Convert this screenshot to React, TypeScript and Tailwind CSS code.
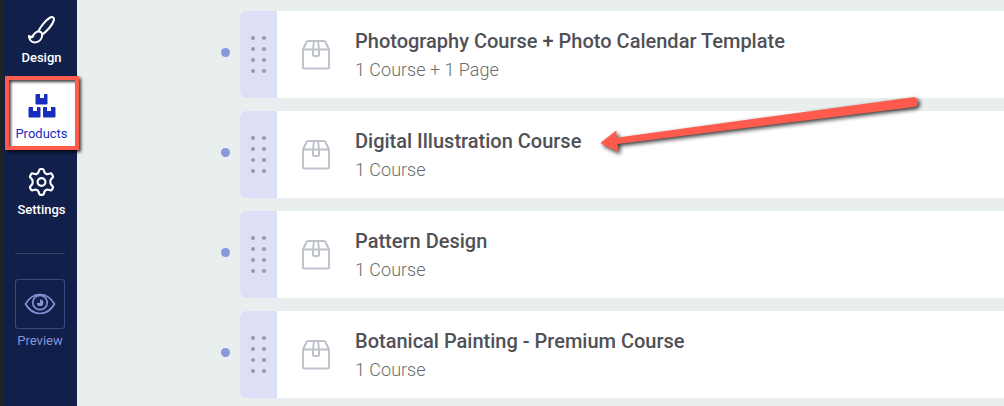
import React from 'react';

type Product = { title: string; detail: string };

const products: Product[] = [
  { title: 'Photography Course + Photo Calendar Template', detail: '1 Course + 1 Page' },
  { title: 'Digital Illustration Course', detail: '1 Course' },
  { title: 'Pattern Design', detail: '1 Course' },
  { title: 'Botanical Painting - Premium Course', detail: '1 Course' },
];

function BrushIcon() {
  return (
    <svg viewBox="0 0 28 28" className="size-7" fill="none" stroke="currentColor" strokeWidth="2" strokeLinejoin="round" strokeLinecap="round" aria-hidden="true">
      <path d="M10.4 15.2C12.8 10.2 18 3.8 22.2 1.5C24.6 .3 26.600 2 25.800 4.400C24.400 9 19 15.300 14 18.600" />
      <path d="M10.2 15.4C12.5 15.2 14.300 16.700 14.200 19C14.100 23.400 10.800 26.500 6.600 26.400C3.500 26.300 1.200 23.800 1 20.200C2.200 21.200 3.700 21.200 4.700 20C5.900 17.900 7.200 15.700 10.200 15.400Z" />
      <path d="M1 20.200C2.200 21.800 4 21.800 5 20" strokeWidth="2.500" />
    </svg>
  );
}

function BoxesIcon() {
  return (
    <svg viewBox="0 0 28 26" className="h-[26px] w-7" fill="currentColor" aria-hidden="true">
      <path d="M8.500 1H12v4h4V1h2.500q1 0 1 1v8.500q0 1-1 1H8.500q-1 0-1-1V2q0-1 1-1Z" />
      <path d="M1.500 14H5v4h4v-4h2.500q1 0 1 1v8.500q0 1-1 1H1.500q-1 0-1-1V15q0-1 1-1Z" />
      <path d="M16 14h3v4h4v-4h3.500q1 0 1 1v8.500q0 1-1 1H16q-1 0-1-1V15q0-1 1-1Z" />
    </svg>
  );
}

function GearIcon() {
  return (
    <svg viewBox="0 0 28 30" className="h-[30px] w-7" fill="none" stroke="currentColor" strokeWidth="2.200" strokeLinejoin="round" aria-hidden="true">
      <path d="M12.600 2H14.400Q15.500 2 15.800 3.100L16.400 5Q16.800 6.200 18 6.700Q19 7.300 20.200 7L22.200 6.500Q23.300 6.200 23.900 7.200L24.800 8.800Q25.400 9.800 24.600 10.600L23.200 12.100Q22.300 13 22.300 14.900Q22.300 16.800 23.200 17.700L24.600 19.200Q25.400 20 24.800 21L23.900 22.600Q23.300 23.600 22.200 23.300L20.200 22.800Q19 22.500 18 23.100Q16.800 23.700 16.400 24.900L15.800 26.800Q15.500 27.900 14.400 27.900H12.600Q11.500 27.900 11.200 26.800L10.600 24.900Q10.200 23.700 9 23.100Q8 22.500 6.800 22.800L4.800 23.300Q3.700 23.600 3.100 22.600L2.200 21Q1.600 20 2.400 19.200L3.800 17.700Q4.700 16.800 4.700 14.900Q4.700 13 3.800 12.100L2.400 10.600Q1.600 9.800 2.200 8.800L3.100 7.200Q3.700 6.200 4.800 6.500L6.800 7Q8 7.300 9 6.700Q10.200 6.200 10.600 5L11.200 3.100Q11.500 2 12.600 2Z" />
      <circle cx="13.500" cy="15" r="3.900" />
    </svg>
  );
}

function EyeIcon() {
  return (
    <svg viewBox="0 0 32 22" className="h-[22px] w-8" fill="none" stroke="currentColor" strokeWidth="1.700" aria-hidden="true">
      <path d="M1.500 11C5 5 10 1.500 16 1.500S27 5 30.500 11C27 17 22 20.500 16 20.500S5 17 1.500 11Z" />
      <circle cx="16" cy="9.500" r="7.200" />
      <path d="M16 6.500a3.300 3.300 0 1 1-3.200 3.500h2.500q.7 0 .7-.7Z" fill="currentColor" stroke="none" />
    </svg>
  );
}

function PackageIcon() {
  return (
    <svg viewBox="0 0 28 30" className="h-[30px] w-7 shrink-0 text-[#bec2cd]" fill="none" stroke="currentColor" strokeWidth="2" strokeLinejoin="round" aria-hidden="true">
      <path d="M1 9.500 4.500 2Q5 1 6 1H22Q23 1 23.500 2L27 9.500V27Q27 28.500 25.500 28.500H2.500Q1 28.500 1 27Z" />
      <path d="M1 9.500H27M12 1 11 9.500V14.500Q11 16 12.500 16H15.500Q17 16 17 14.500V9.500L16 1" />
    </svg>
  );
}

function NavItem({ label, icon, active = false }: { label: string; icon: React.ReactNode; active?: boolean }) {
  return (
    <a
      href={'#' + label.toLowerCase()}
      aria-current={active ? 'page' : undefined}
      className={
        'relative flex h-[76px] flex-col items-center gap-[5px] pt-[15px] pl-[3px] text-[13px] leading-4 ' +
        (active ? 'text-[#172ebd]' : 'font-medium text-white')
      }
    >
      {active && (
        <span className="absolute top-0 -right-[2px] left-[2px] h-[74px] border-4 border-[#ff5b4d] bg-white shadow-[2px_2px_3px_rgba(0,0,0,0.75),inset_2px_2px_3px_rgba(0,0,0,0.75)]" />
      )}
      <span className="relative flex h-[30px] items-center">{icon}</span>
      <span className="relative">{label}</span>
    </a>
  );
}

function Sidebar() {
  return (
    <aside className="relative z-10 flex w-[77px] shrink-0 flex-col border-l-[3px] border-[#222328] bg-[#10204b]">
      <nav>
        <NavItem label="Design" icon={<BrushIcon />} />
        <NavItem label="Products" icon={<BoxesIcon />} active />
        <NavItem label="Settings" icon={<GearIcon />} />
      </nav>
      <hr className="mx-3 mt-[25px] border-[#364164]" />
      <button type="button" className="mt-[25px] flex flex-col items-center gap-1 text-[13px] leading-4 text-[#8793d7]">
        <span className="flex size-[50px] items-center justify-center rounded-[3px] border border-[#3c4a7d]">
          <EyeIcon />
        </span>
        Preview
      </button>
    </aside>
  );
}

function ProductRow({ title, detail }: Product) {
  return (
    <li className="flex items-center gap-[10px]">
      <span className="mb-1 size-[9px] shrink-0 rounded-full bg-[#8998dc]" />
      <article className="flex h-[87px] min-w-0 flex-1 overflow-hidden rounded-l-md bg-white">
        <button type="button" aria-label={'Reorder ' + title} className="flex w-[37px] shrink-0 items-center justify-center bg-[#dddff6]">
          <span className="grid grid-cols-2 gap-[7px]">
            {Array.from({ length: 8 }, (_, i) => (
              <span key={i} className="size-1 rounded-full bg-[#969aae]" />
            ))}
          </span>
        </button>
        <div className="flex min-w-0 items-center gap-[25px] pl-[25px]">
          <PackageIcon />
          <div className="pt-[3px]">
            <h2 className="text-[20px] leading-7 font-medium whitespace-nowrap text-[#505156]">{title}</h2>
            <p className="text-[18px] leading-[30px] font-light text-[#6c6c6c]">{detail}</p>
          </div>
        </div>
      </article>
    </li>
  );
}

function PointerArrow() {
  return (
    <svg viewBox="0 0 330 66" className="pointer-events-none absolute top-[92px] left-[596px] h-[66px] w-[330px] drop-shadow-[2px_2px_2px_rgba(0,0,0,0.8)]" aria-hidden="true">
      <path
        d="M5.500 50 19 39.500Q20.500 38.500 20.500 40L20.500 45.700 317 5.200C323 4.500 324 14 318 15L21.500 52 22.500 58.500Q22.500 60 21 59.500L5.500 52Q4.500 51 5.500 50Z"
        fill="#ff5b4d"
      />
    </svg>
  );
}

export default function App() {
  return (
    <div className="relative flex min-h-screen overflow-hidden bg-[#e9efef] font-['Roboto','Liberation_Sans',sans-serif]">
      <Sidebar />
      <main className="min-w-0 flex-1 pt-[11px] pl-36">
        <ul className="flex flex-col gap-[13px]">
          {products.map((product) => (
            <ProductRow key={product.title} {...product} />
          ))}
        </ul>
      </main>
      <PointerArrow />
    </div>
  );
}
